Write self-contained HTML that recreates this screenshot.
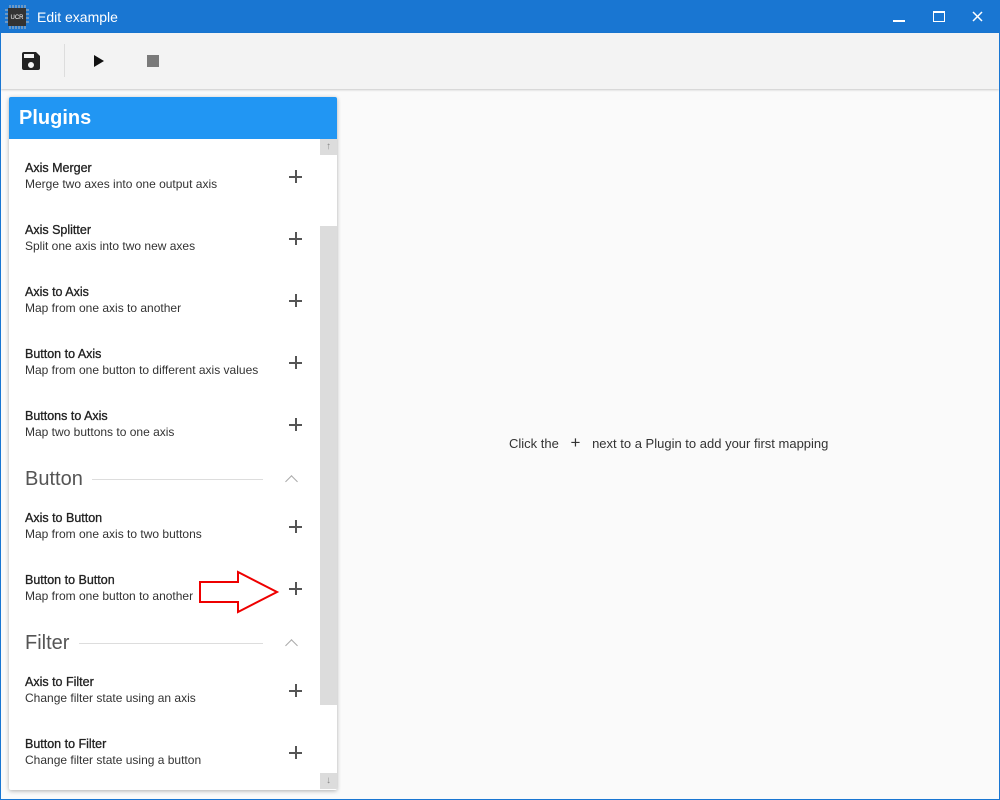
<!DOCTYPE html>
<html><head><style>
*{margin:0;padding:0;box-sizing:border-box}
body{width:1000px;height:800px;overflow:hidden;background:#fafafa;font-family:"Liberation Sans",sans-serif;position:relative}
.frame{position:absolute;left:0;top:0;width:1000px;height:800px;border:1px solid #1976d2;border-top:none;pointer-events:none}
.title{position:absolute;left:0;top:0;width:1000px;height:33px;background:#1976d2;color:#fff}
.tb{position:absolute;left:1px;top:33px;width:998px;height:56px;background:#f3f3f3;box-shadow:0 1px 2px rgba(0,0,0,.2)}
.panel{position:absolute;left:9px;top:97px;width:328px;height:693px;background:#fff;box-shadow:0 1px 4px rgba(0,0,0,.3);border-radius:2px;overflow:hidden}
.ph{height:42px;background:#2196f3;color:#fff;font-size:20px;font-weight:bold;padding:10px 0 0 10px}
.it{position:absolute;left:16px;font-size:12px;color:#333;line-height:15px}
.it b{display:block;font-weight:normal;color:#222;font-size:12.5px;margin-bottom:1px;-webkit-text-stroke:0.3px #222}
.plus{position:absolute;left:280px;width:13px;height:13px}
.plus:before{content:"";position:absolute;left:6px;top:0;width:1.5px;height:13px;background:#555}
.plus:after{content:"";position:absolute;top:6px;left:0;height:1.5px;width:13px;background:#555}
.sec{position:absolute;left:16px;font-size:20px;color:#555}
.line{position:absolute;height:1px;background:#ddd;right:74px}
.chev{position:absolute;left:278px;width:9px;height:9px;border-left:1.5px solid #aaa;border-top:1.5px solid #aaa;transform:rotate(45deg)}
</style></head><body>
<div class="title">
<svg style="position:absolute;left:5px;top:5px" width="24" height="24" viewBox="0 0 24 24"><rect x="3" y="3" width="18" height="18" fill="#333"/><g stroke="#bbb" stroke-width="1"><path d="M5 0v3M8 0v3M11 0v3M14 0v3M17 0v3M20 0v3M5 21v3M8 21v3M11 21v3M14 21v3M17 21v3M20 21v3M0 5h3M0 9h3M0 13h3M0 17h3M21 5h3M21 9h3M21 13h3M21 17h3"/></g><text x="12" y="14" font-size="6" fill="#fff" text-anchor="middle" font-family="Liberation Sans">UCR</text></svg>
<div style="position:absolute;left:37px;top:9px;font-size:14px">Edit example</div>
<div style="position:absolute;left:893px;top:20px;width:12px;height:2px;background:#fff"></div>
<div style="position:absolute;left:933px;top:11px;width:12px;height:11px;border:1.5px solid #fff;border-top-width:2.5px"></div>
<svg style="position:absolute;left:972px;top:11px" width="11" height="11"><path d="M1 1L10 10M10 1L1 10" stroke="#fff" stroke-width="1.5"/></svg>
</div>
<div class="tb">
<svg style="position:absolute;left:21px;top:19px" width="18" height="18" viewBox="3 3 18 18"><path fill="#222" d="M17 3H5a2 2 0 0 0-2 2v14a2 2 0 0 0 2 2h14a2 2 0 0 0 2-2V7l-4-4zm-5 16a3 3 0 1 1 0-6 3 3 0 0 1 0 6zm3-10H5V5h10v4z"/></svg>
<div style="position:absolute;left:63px;top:11px;width:1px;height:33px;background:#ddd"></div>
<svg style="position:absolute;left:92px;top:21px" width="12" height="14"><path d="M1 1L11 7L1 13z" fill="#111"/></svg>
<div style="position:absolute;left:146px;top:22px;width:12px;height:12px;background:#7a7a7a"></div>
</div>
<div class="panel">
<div class="ph">Plugins</div>
<div style="position:absolute;left:311px;top:129px;width:17px;height:479px;background:#dcdcdc"></div>
<div style="position:absolute;left:311px;top:42px;width:17px;height:16px;background:#dcdcdc;color:#888;font-size:10px;text-align:center;line-height:16px">↑</div>
<div style="position:absolute;left:311px;top:676px;width:17px;height:16px;background:#dcdcdc;color:#888;font-size:10px;text-align:center;line-height:16px">↓</div>

<div class="it" style="top:64px"><b>Axis Merger</b>Merge two axes into one output axis</div><div class="plus" style="top:73px"></div>
<div class="it" style="top:126px"><b>Axis Splitter</b>Split one axis into two new axes</div><div class="plus" style="top:135px"></div>
<div class="it" style="top:188px"><b>Axis to Axis</b>Map from one axis to another</div><div class="plus" style="top:197px"></div>
<div class="it" style="top:250px"><b>Button to Axis</b>Map from one button to different axis values</div><div class="plus" style="top:259px"></div>
<div class="it" style="top:312px"><b>Buttons to Axis</b>Map two buttons to one axis</div><div class="plus" style="top:321px"></div>
<div class="sec" style="top:371px">Button</div><div class="line" style="top:382px;left:83px"></div><div class="chev" style="top:380px"></div>
<div class="it" style="top:414px"><b>Axis to Button</b>Map from one axis to two buttons</div><div class="plus" style="top:423px"></div>
<div class="it" style="top:476px"><b>Button to Button</b>Map from one button to another</div><div class="plus" style="top:485px"></div>
<div class="sec" style="top:535px">Filter</div><div class="line" style="top:546px;left:70px"></div><div class="chev" style="top:544px"></div>
<div class="it" style="top:578px"><b>Axis to Filter</b>Change filter state using an axis</div><div class="plus" style="top:587px"></div>
<div class="it" style="top:640px"><b>Button to Filter</b>Change filter state using a button</div><div class="plus" style="top:649px"></div>
</div>
<svg style="position:absolute;left:198px;top:570px" width="82" height="44"><path d="M2 12H40V2L79 22L40 42V32H2Z" fill="#fff" stroke="#e00" stroke-width="2"/></svg>
<div style="position:absolute;left:509px;top:436px;font-size:13px;color:#333">Click the <span style="display:inline-block;width:26px;text-align:center;font-size:17px;line-height:13px">+</span> next to a Plugin to add your first mapping</div>
<div class="frame"></div>
</body></html>
